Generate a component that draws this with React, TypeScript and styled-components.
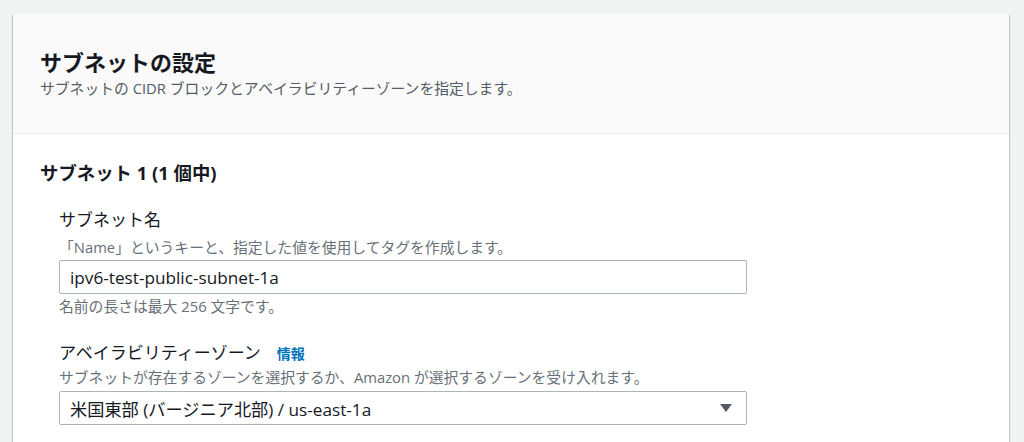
import React from "react";
import styled, { createGlobalStyle } from "styled-components";

const Global = createGlobalStyle`
  html, body {
    margin: 0;
    padding: 0;
    background: #f2f3f3;
    overflow: hidden;
  }
  * { box-sizing: border-box; }
  body {
    font-family: "Open Sans", "Noto Sans CJK JP", sans-serif;
    color: #16191f;
  }
`;

const Page = styled.div`
  padding: 14px 15px 0 13px;
  height: 442px;
`;

const Card = styled.section`
  background: #ffffff;
  box-shadow: 0 1px 1px 0 rgba(0, 28, 36, 0.3), 1px 1px 1px 0 rgba(0, 28, 36, 0.15),
    -1px 1px 1px 0 rgba(0, 28, 36, 0.15);
  min-height: 460px;
`;

const Header = styled.header`
  background: #fafafa;
  border-bottom: 1px solid #eaeded;
  padding: 34px 27px 35px 27px;
`;

const Title = styled.h2`
  margin: 0;
  font-size: 22px;
  line-height: 28px;
  font-weight: 700;
  color: #16191f;
`;

const Subtitle = styled.p`
  margin: 2px 0 0;
  font-size: 14.8px;
  line-height: 20px;
  color: #545b64;
`;

const Body = styled.div`
  padding: 27px 27px 20px 27px;
`;

const SectionTitle = styled.h3`
  margin: 0;
  font-size: 18.4px;
  line-height: 24px;
  font-weight: 700;
`;

const Fields = styled.div`
  padding-left: 19px;
  display: flex;
  flex-direction: column;
`;

const Field = styled.div<{ $top: number }>`
  margin-top: ${(p) => p.$top}px;
  display: flex;
  flex-direction: column;
  width: 688px;
`;

const LabelRow = styled.div`
  display: flex;
  align-items: baseline;
  gap: 16px;
`;

const Label = styled.label`
  font-size: 17px;
  line-height: 22px;
  color: #16191f;
`;

const InfoLink = styled.a`
  font-size: 14px;
  font-weight: 700;
  color: #0073bb;
  text-decoration: none;
`;

const Description = styled.div<{ $top: number }>`
  margin-top: ${(p) => p.$top}px;
  font-size: 14.8px;
  line-height: 18px;
  color: #687078;
`;

const Control = styled.div<{ $top: number }>`
  margin-top: ${(p) => p.$top}px;
  height: 34px;
  border: 1px solid #aab7b8;
  border-radius: 2px;
  background: #fff;
  display: flex;
  align-items: center;
  justify-content: space-between;
  padding: 0 14px 0 10px;
  font-size: 17.2px;
  color: #16191f;
`;

const Caret = styled.span`
  width: 0;
  height: 0;
  border-left: 6px solid transparent;
  border-right: 6px solid transparent;
  border-top: 8px solid #545b64;
`;

export default function App() {
  return (
    <>
      <Global />
      <Page>
        <Card>
          <Header>
            <Title>サブネットの設定</Title>
            <Subtitle>サブネットの CIDR ブロックとアベイラビリティーゾーンを指定します。</Subtitle>
          </Header>
          <Body>
            <SectionTitle>サブネット 1 (1 個中)</SectionTitle>
            <Fields>
              <Field $top={24}>
                <Label>サブネット名</Label>
                <Description $top={7}>「Name」というキーと、指定した値を使用してタグを作成します。</Description>
                <Control $top={4}>ipv6-test-public-subnet-1a</Control>
                <Description $top={3}>名前の長さは最大 256 文字です。</Description>
              </Field>
              <Field $top={27}>
                <LabelRow>
                  <Label>アベイラビリティーゾーン</Label>
                  <InfoLink href="#">情報</InfoLink>
                </LabelRow>
                <Description $top={4}>
                  サブネットが存在するゾーンを選択するか、Amazon が選択するゾーンを受け入れます。
                </Description>
                <Control $top={5}>
                  <span>米国東部 (バージニア北部) / us-east-1a</span>
                  <Caret />
                </Control>
              </Field>
            </Fields>
          </Body>
        </Card>
      </Page>
    </>
  );
}
